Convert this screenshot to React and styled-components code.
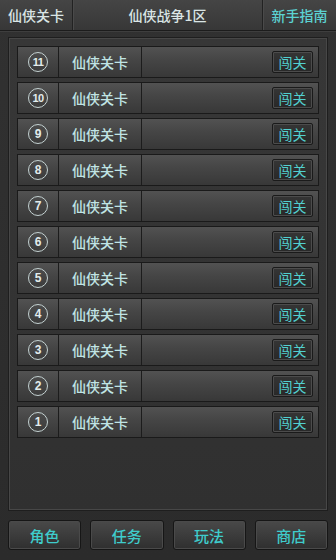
import React from 'react'
import styled, { createGlobalStyle } from 'styled-components'

const GlobalStyle = createGlobalStyle`
  html, body {
    margin: 0;
    padding: 0;
    background: #2d2d2d;
  }
  body {
    font-family: "Noto Sans CJK SC", "Noto Sans", sans-serif;
  }
`

const Page = styled.div`
  width: 336px;
  height: 560px;
  display: flex;
  flex-direction: column;
  background: linear-gradient(180deg, #313131 0%, #2b2b2b 100%);
  overflow: hidden;
`

const Header = styled.div`
  height: 30px;
  display: grid;
  grid-template-columns: 72px 1fr 74px;
  background: linear-gradient(180deg, #454545 0%, #373737 100%);
  border-bottom: 1px solid #1c1c1c;
  box-shadow: 0 1px 0 #3e3e3e;
`

const HeadCell = styled.div`
  display: flex;
  align-items: center;
  justify-content: center;
  font-size: 14px;
  font-weight: 500;
  color: ${p => (p.$accent ? '#5cd2d2' : '#dae5e5')};
  border-left: ${p => (p.$first ? 'none' : '1px solid #222')};
  box-shadow: ${p => (p.$first ? 'none' : 'inset 1px 0 0 #4a4a4a')};
`

const Panel = styled.div`
  margin: 6px 8px 0;
  height: 474px;
  box-sizing: border-box;
  border: 1px solid #1e1e1e;
  box-shadow: inset 0 0 0 1px #474747;
  background: linear-gradient(180deg, #373737 0%, #303030 100%);
  padding: 8px 8px 0;
  display: flex;
  flex-direction: column;
  gap: 4px;
`

const Row = styled.div`
  height: 32px;
  box-sizing: border-box;
  display: grid;
  grid-template-columns: 41px 83px 1fr;
  border: 1px solid #1a1a1a;
  background: linear-gradient(180deg, #525252 0%, #464646 40%, #383838 100%);
`

const NumCell = styled.div`
  display: flex;
  align-items: center;
  justify-content: center;
  border-right: 1px solid #1c1c1c;
`

const Circle = styled.div`
  width: 20px;
  height: 20px;
  box-sizing: border-box;
  border: 1.5px solid #c4d2d2;
  border-radius: 50%;
  display: flex;
  align-items: center;
  justify-content: center;
  font-family: "Liberation Sans", Arial, sans-serif;
  font-size: ${p => (p.$small ? '11px' : '12px')};
  font-weight: bold;
  color: #e2ecec;
  letter-spacing: ${p => (p.$small ? '-0.5px' : '0')};
`

const NameCell = styled.div`
  display: flex;
  align-items: center;
  justify-content: center;
  font-size: 14px;
  font-weight: 500;
  color: #c0e4e4;
  border-right: 1px solid #1c1c1c;
`

const ActionCell = styled.div`
  display: flex;
  align-items: center;
  justify-content: flex-end;
  padding-right: 5px;
`

const EnterButton = styled.div`
  width: 41px;
  height: 22px;
  box-sizing: border-box;
  border: 1px solid #1a1a1a;
  border-radius: 2px;
  box-shadow: inset 0 0 0 1px #4c4c4c;
  background: linear-gradient(180deg, #353535 0%, #282828 100%);
  display: flex;
  align-items: center;
  justify-content: center;
  font-size: 14px;
  color: #52d0d0;
`

const Footer = styled.div`
  margin: 9px 8px 0;
  display: grid;
  grid-template-columns: repeat(4, 1fr);
  gap: 9px;
`

const NavButton = styled.div`
  height: 30px;
  box-sizing: border-box;
  border: 1px solid #161616;
  border-radius: 3px;
  box-shadow: inset 0 0 0 1px #4a4a4a;
  background: linear-gradient(180deg, #494949 0%, #3c3c3c 50%, #2f2f2f 100%);
  display: flex;
  align-items: center;
  justify-content: center;
  font-size: 15px;
  font-weight: 500;
  color: #3fcccc;
`

const levels = [11, 10, 9, 8, 7, 6, 5, 4, 3, 2, 1]
const navs = ['角色', '任务', '玩法', '商店']

export default function App() {
  return (
    <Page>
      <GlobalStyle />
      <Header>
        <HeadCell $first>仙侠关卡</HeadCell>
        <HeadCell>仙侠战争1区</HeadCell>
        <HeadCell $accent>新手指南</HeadCell>
      </Header>
      <Panel>
        {levels.map(n => (
          <Row key={n}>
            <NumCell>
              <Circle $small={n > 9}>{n}</Circle>
            </NumCell>
            <NameCell>仙侠关卡</NameCell>
            <ActionCell>
              <EnterButton>闯关</EnterButton>
            </ActionCell>
          </Row>
        ))}
      </Panel>
      <Footer>
        {navs.map(label => (
          <NavButton key={label}>{label}</NavButton>
        ))}
      </Footer>
    </Page>
  )
}
